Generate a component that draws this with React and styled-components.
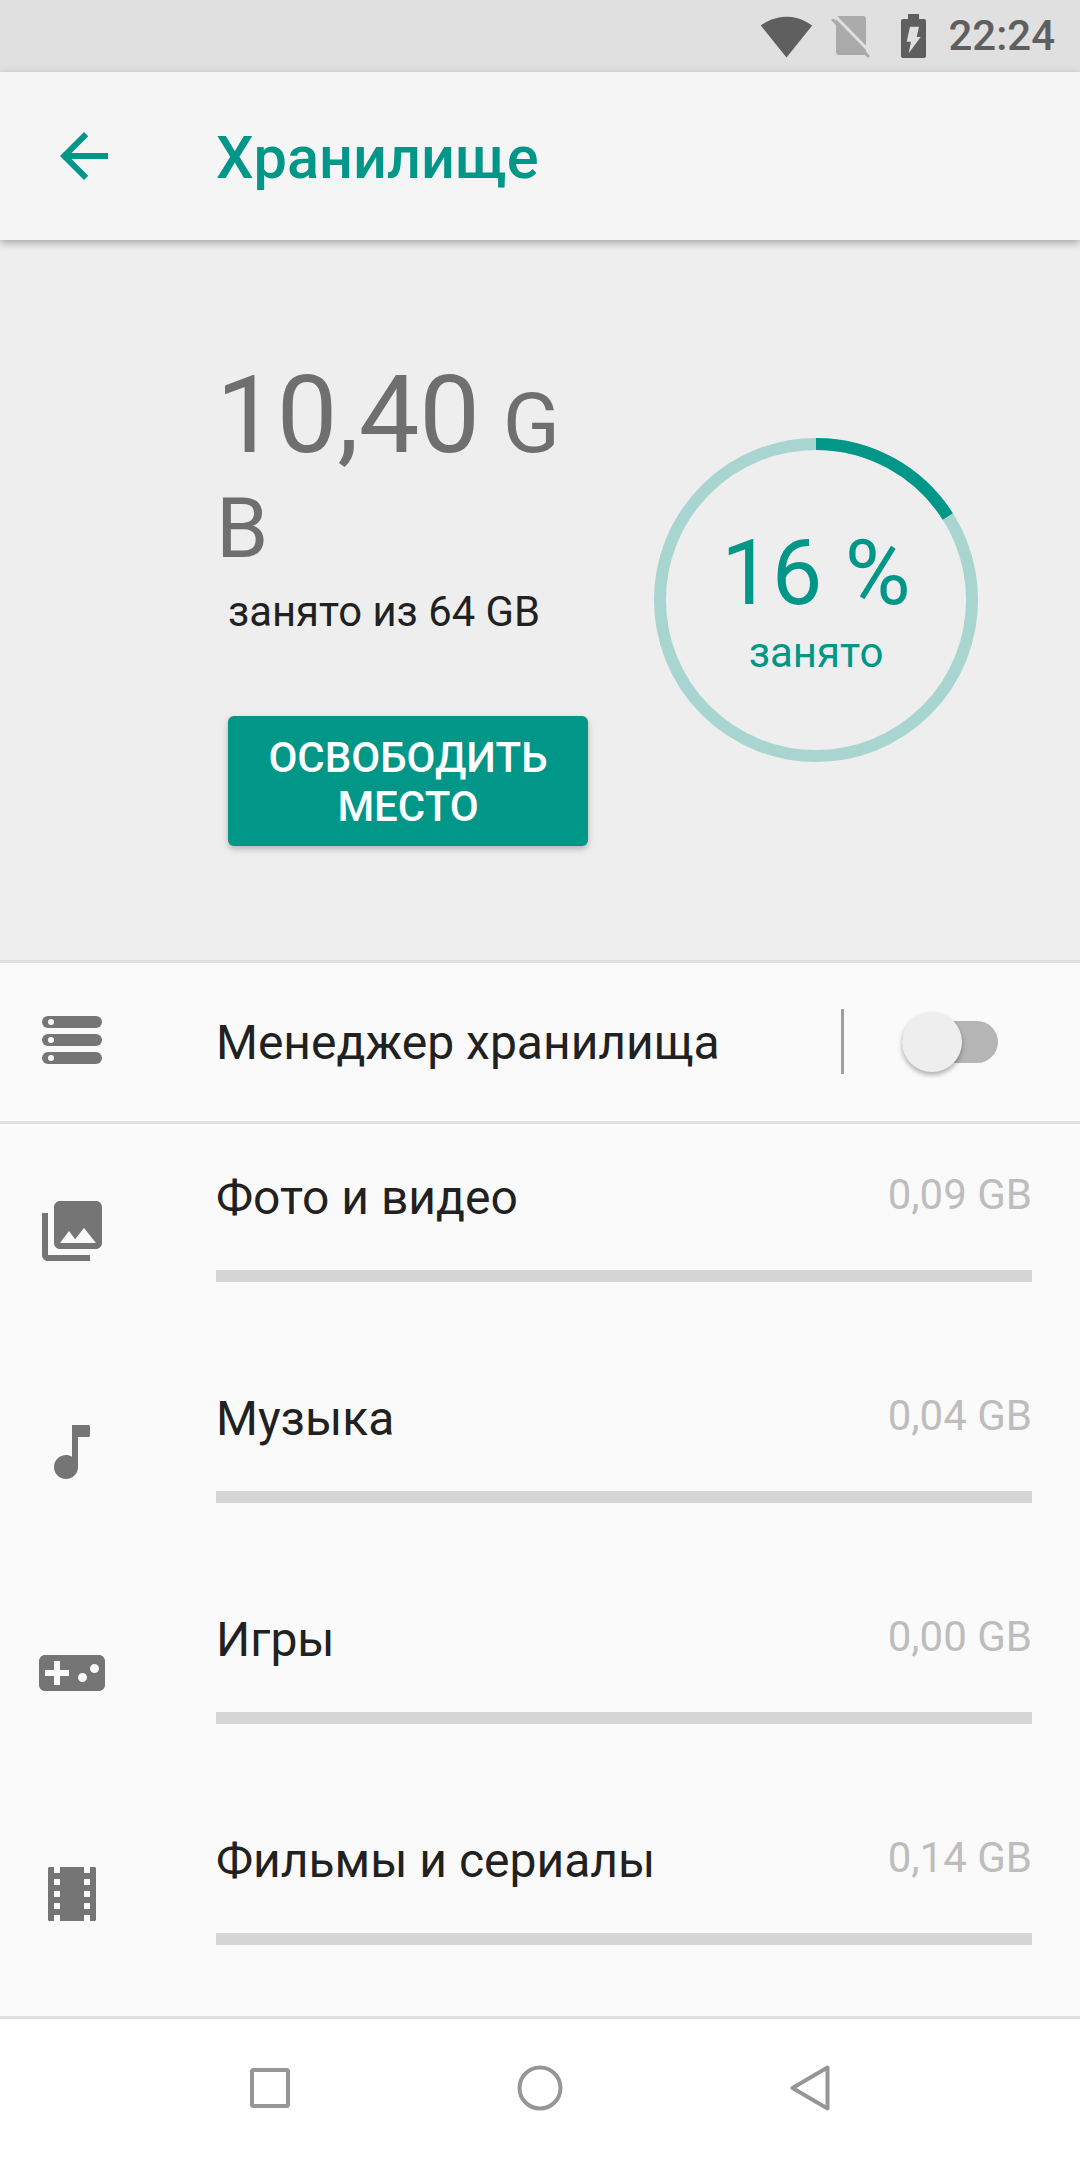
import React from "react";
import styled, { createGlobalStyle } from "styled-components";

const usedPercent = 16;
const ringRadius = 156;
const ringLength = 2 * Math.PI * ringRadius;

const items = [
  { id: "photo", name: "Фото и видео", size: "0,09 GB", icon: "photo" },
  { id: "music", name: "Музыка", size: "0,04 GB", icon: "music" },
  { id: "games", name: "Игры", size: "0,00 GB", icon: "games" },
  { id: "movies", name: "Фильмы и сериалы", size: "0,14 GB", icon: "movies" },
];

const iconPaths = {
  photo:
    "M22 16V4c0-1.1-.9-2-2-2H8c-1.1 0-2 .9-2 2v12c0 1.1.9 2 2 2h12c1.1 0 2-.9 2-2zm-11-4l2.03 2.71L16 11l4 5H8l3-4zM2 6v14c0 1.1.9 2 2 2h14v-2H4V6H2z",
  music:
    "M12 3v10.55c-.59-.34-1.27-.55-2-.55-2.21 0-4 1.79-4 4s1.79 4 4 4 4-1.79 4-4V7h3.5c.28 0 .5-.22.5-.5v-3c0-.28-.22-.5-.5-.5H12z",
  games:
    "M21 6H3c-1.1 0-2 .9-2 2v8c0 1.1.9 2 2 2h18c1.1 0 2-.9 2-2V8c0-1.1-.9-2-2-2zm-10 7H8v3H6v-3H3v-2h3V8h2v3h3v2zm4.5 2c-.83 0-1.5-.67-1.5-1.5s.67-1.5 1.5-1.5 1.5.67 1.5 1.5-.67 1.5-1.5 1.5zm4-3c-.83 0-1.5-.67-1.5-1.5S18.67 9 19.5 9s1.5.67 1.5 1.5-.67 1.5-1.5 1.5z",
  movies:
    "M18 3v2h-2V3H8v2H6V3H4.5C4.22 3 4 3.22 4 3.5v17c0 .28.22.5.5.5H6v-2h2v2h8v-2h2v2h1.5c.28 0 .5-.22.5-.5v-17c0-.28-.22-.5-.5-.5H18zM8 17H6v-2h2v2zm0-4H6v-2h2v2zm0-4H6V7h2v2zm10 8h-2v-2h2v2zm0-4h-2v-2h2v2zm0-4h-2V7h2v2z",
};

const App = () => {
  return (
    <Screen>
      <GlobalStyle />
      <StatusBar>
        <svg width="53" height="53" viewBox="0 0 24 24">
          <path
            fill="#5f5f5f"
            d="M12.01 21.49L23.64 7c-.45-.34-4.93-4-11.64-4C5.28 3 .81 6.66.36 7l11.63 14.49.01.01.01-.01z"
          />
        </svg>
        <SimIcon width="40" height="44" viewBox="0 0 40 44">
          <rect x="5" y="2" width="30" height="39" rx="3" fill="#aaaaaa" />
          <line x1="5" y1="3" x2="40" y2="39" stroke="#e0e0e0" strokeWidth="3" />
          <line x1="2" y1="6" x2="37" y2="42" stroke="#aaaaaa" strokeWidth="3" strokeLinecap="round" />
        </SimIcon>
        <BatteryIcon width="25" height="44" viewBox="0 0 25 44">
          <path
            fill="#5f5f5f"
            d="M7 0h11v5h5c1.1 0 2 .9 2 2v35c0 1.1-.9 2-2 2H2c-1.1 0-2-.9-2-2V7c0-1.1.9-2 2-2h5z"
          />
          <path fill="#e0e0e0" d="M9 12.7h9l-2.3 10.3h4L7.7 39.3 10 27.7H5.7z" />
        </BatteryIcon>
        <Clock>22:24</Clock>
      </StatusBar>

      <Header>
        <BackIcon viewBox="0 0 24 24">
          <path d="M20 11H7.83l5.59-5.59L12 4l-8 8 8 8 1.41-1.41L7.83 13H20v-2z" />
        </BackIcon>
        <Title>Хранилище</Title>
      </Header>

      <Hero>
        <Summary>
          <Amount>
            10,40 <Unit>GB</Unit>
          </Amount>
          <Capacity>занято из 64 GB</Capacity>
          <FreeButton>
            ОСВОБОДИТЬ
            <br />
            МЕСТО
          </FreeButton>
        </Summary>
        <Ring>
          <svg width="324" height="324" viewBox="0 0 324 324">
            <circle cx="162" cy="162" r={ringRadius} fill="none" stroke="#a9d5d1" strokeWidth="12" />
            <circle
              cx="162"
              cy="162"
              r={ringRadius}
              fill="none"
              stroke="#009688"
              strokeWidth="12"
              strokeDasharray={`${(ringLength * usedPercent) / 100} ${ringLength}`}
              transform="rotate(-90 162 162)"
            />
          </svg>
          <RingText>
            <Percent>{usedPercent} %</Percent>
            <RingLabel>занято</RingLabel>
          </RingText>
        </Ring>
      </Hero>

      <ManagerRow>
        <IconCell>
          <ListIcon viewBox="0 0 72 72">
            <rect x="6" y="12" width="60" height="12" rx="6" />
            <rect x="6" y="30" width="60" height="12" rx="6" />
            <rect x="6" y="48" width="60" height="12" rx="6" />
            <circle cx="15" cy="18" r="3" fill="#fafafa" />
            <circle cx="15" cy="36" r="3" fill="#fafafa" />
            <circle cx="15" cy="54" r="3" fill="#fafafa" />
          </ListIcon>
        </IconCell>
        <ManagerLabel>Менеджер хранилища</ManagerLabel>
        <Separator />
        <Switch>
          <Thumb />
        </Switch>
      </ManagerRow>

      <List>
        {items.map((item) => (
          <Item key={item.id}>
            <ItemIconCell>
              <ListIcon viewBox="0 0 24 24">
                <path d={iconPaths[item.icon]} />
              </ListIcon>
            </ItemIconCell>
            <ItemBody>
              <ItemHead>
                <ItemName>{item.name}</ItemName>
                <ItemSize>{item.size}</ItemSize>
              </ItemHead>
              <Bar />
            </ItemBody>
          </Item>
        ))}
      </List>

      <NavBar>
        <NavCell>
          <svg width="40" height="40" viewBox="0 0 40 40">
            <rect x="2" y="2" width="36" height="36" rx="1.5" fill="none" stroke="#969696" strokeWidth="4" />
          </svg>
        </NavCell>
        <NavCell>
          <svg width="46" height="46" viewBox="0 0 46 46">
            <circle cx="23" cy="23" r="20.5" fill="none" stroke="#969696" strokeWidth="4" />
          </svg>
        </NavCell>
        <NavCell>
          <svg width="40" height="46" viewBox="0 0 40 46">
            <path
              d="M37.5 2.5v41L2.5 23z"
              fill="none"
              stroke="#969696"
              strokeWidth="4"
              strokeLinejoin="round"
            />
          </svg>
        </NavCell>
      </NavBar>
    </Screen>
  );
};

const GlobalStyle = createGlobalStyle`
  body {
    margin: 0;
    background: #ffffff;
    font-family: Roboto, "Liberation Sans", sans-serif;
  }
`;

const Screen = styled.div`
  width: 1080px;
  height: 2160px;
  display: flex;
  flex-direction: column;
  overflow: hidden;
`;

const StatusBar = styled.div`
  height: 72px;
  flex: none;
  padding-right: 25px;
  display: flex;
  justify-content: flex-end;
  align-items: center;
  background: #e0e0e0;
`;

const SimIcon = styled.svg`
  margin-left: 18px;
`;

const BatteryIcon = styled.svg`
  margin-left: 30px;
`;

const Clock = styled.span`
  margin-left: 22px;
  font-size: 42px;
  line-height: 50px;
  font-weight: 500;
  color: #5f5f5f;
`;

const Header = styled.header`
  position: relative;
  z-index: 1;
  height: 168px;
  flex: none;
  padding-left: 48px;
  display: flex;
  align-items: center;
  gap: 96px;
  background: #f5f5f5;
  box-shadow: 0 3px 8px rgba(0, 0, 0, 0.3);
`;

const BackIcon = styled.svg`
  width: 72px;
  height: 72px;
  fill: #009688;
`;

const Title = styled.h1`
  margin: 3px 0 0;
  font-size: 59.5px;
  line-height: 70px;
  font-weight: 500;
  color: #009688;
`;

const Hero = styled.section`
  height: 720px;
  flex: none;
  display: flex;
  padding-left: 216px;
  background: #eeeeee;
`;

const Summary = styled.div`
  width: 438px;
  flex: none;
  padding-top: 123px;
`;

const Amount = styled.div`
  width: 350px;
  font-size: 108px;
  line-height: 105px;
  color: #6f6f6f;
  word-break: break-all;
  word-spacing: -4px;
`;

const Unit = styled.span`
  font-size: 84px;
  line-height: 84px;
`;

const Capacity = styled.div`
  margin: 14px 0 0 12px;
  font-size: 41.8px;
  line-height: 50px;
  color: #212121;
`;

const FreeButton = styled.button`
  display: block;
  width: 360px;
  height: 130px;
  margin: 79px 0 0 12px;
  padding: 2px 0 0;
  border: none;
  border-radius: 6px;
  background: #009688;
  color: #ffffff;
  font-family: inherit;
  font-size: 42px;
  line-height: 49px;
  font-weight: 500;
  box-shadow: 0 3px 6px rgba(0, 0, 0, 0.25);
`;

const Ring = styled.div`
  width: 324px;
  height: 324px;
  margin-top: 198px;
  display: grid;
  & > * {
    grid-area: 1 / 1;
  }
`;

const RingText = styled.div`
  display: flex;
  flex-direction: column;
  align-items: center;
  padding-top: 84px;
  color: #009688;
`;

const Percent = styled.div`
  font-size: 90px;
  line-height: 104px;
`;

const RingLabel = styled.div`
  margin-top: 2px;
  font-size: 42px;
  line-height: 50px;
`;

const ManagerRow = styled.div`
  height: 158px;
  flex: none;
  display: flex;
  align-items: center;
  background: #fafafa;
  border-top: 3px solid #e0e0e0;
  border-bottom: 3px solid #e0e0e0;
`;

const IconCell = styled.div`
  width: 216px;
  flex: none;
  padding-left: 36px;
  box-sizing: border-box;
  display: flex;
  margin-top: -4px;
`;

const ListIcon = styled.svg`
  width: 72px;
  height: 72px;
  display: block;
  fill: #757575;
`;

const ManagerLabel = styled.div`
  flex: 1;
  margin-top: 2px;
  font-size: 48px;
  line-height: 56px;
  color: #212121;
`;

const Separator = styled.div`
  width: 3px;
  height: 65px;
  margin: -2px 58px 0 0;
  background: #9e9e9e;
`;

const Switch = styled.div`
  position: relative;
  width: 96px;
  height: 42px;
  margin-right: 82px;
  border-radius: 21px;
  background: #b5b5b5;
`;

const Thumb = styled.div`
  position: absolute;
  left: 0;
  top: -9px;
  width: 60px;
  height: 60px;
  border-radius: 50%;
  background: #eeeeee;
  box-shadow: 0 3px 5px rgba(0, 0, 0, 0.3);
`;

const List = styled.div`
  flex: 1;
  background: #fafafa;
  border-bottom: 3px solid #e0e0e0;
`;

const Item = styled.div`
  height: 221px;
  display: grid;
  grid-template-columns: 216px 1fr;
  padding-right: 48px;
`;

const ItemIconCell = styled.div`
  padding: 71px 0 0 36px;
`;

const ItemBody = styled.div`
  padding-top: 46px;
`;

const ItemHead = styled.div`
  display: flex;
  justify-content: space-between;
  align-items: flex-start;
`;

const ItemName = styled.div`
  font-size: 48px;
  line-height: 56px;
  color: #212121;
`;

const ItemSize = styled.div`
  font-size: 42px;
  line-height: 50px;
  color: #bdbdbd;
`;

const Bar = styled.div`
  height: 12px;
  margin-top: 44px;
  background: #d6d6d6;
`;

const NavBar = styled.nav`
  height: 141px;
  flex: none;
  padding-bottom: 3px;
  box-sizing: border-box;
  display: flex;
  justify-content: center;
  background: #ffffff;
`;

const NavCell = styled.div`
  width: 270px;
  display: flex;
  justify-content: center;
  align-items: center;
`;

export default App;
